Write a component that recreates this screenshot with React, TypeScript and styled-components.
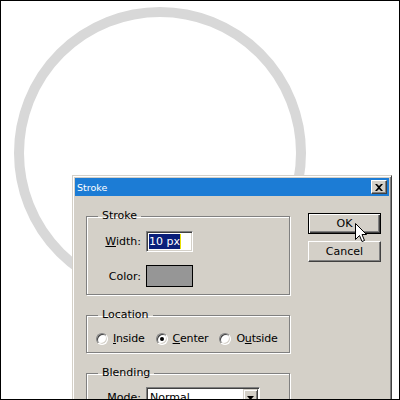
import styled, { createGlobalStyle } from "styled-components";

const GlobalStyle = createGlobalStyle`
  body {
    margin: 0;
    background: #fff;
  }
`;

const Frame = styled.div`
  position: relative;
  width: 400px;
  height: 400px;
  box-sizing: border-box;
  border: 1px solid #000;
  background: #fff;
  overflow: hidden;
`;

const Canvas = styled.svg`
  display: block;
`;

const Dialog = styled.div`
  position: absolute;
  left: 71px;
  top: 174px;
  width: 320px;
  height: 250px;
  box-sizing: border-box;
  padding: 2px;
  background: #d4d0c8;
  border: 1px solid;
  border-color: #d4d0c8 #404040 #404040 #d4d0c8;
  box-shadow: inset 1px 1px 0 #fff, inset -1px -1px 0 #808080;
  font-family: "DejaVu Sans", sans-serif;
  font-size: 11px;
  color: #000;
`;

const TitleBar = styled.div`
  display: flex;
  align-items: center;
  justify-content: space-between;
  height: 18px;
  padding: 0 2px;
  background: #1c7cd5;
  color: #fff;
  font-size: 9.5px;
`;

const CloseButton = styled.div`
  display: flex;
  align-items: center;
  justify-content: center;
  width: 16px;
  height: 14px;
  box-sizing: border-box;
  background: #d4d0c8;
  border: 1px solid;
  border-color: #fff #404040 #404040 #fff;
  box-shadow: inset -1px -1px 0 #808080;
`;

const Body = styled.div`
  display: flex;
  gap: 18px;
  padding: 13px 0 0 11px;
`;

const LeftCol = styled.div`
  display: flex;
  flex-direction: column;
  gap: 13px;
  width: 204px;
`;

const Group = styled.fieldset`
  margin: 0;
  padding: 0;
  min-width: 0;
  width: 204px;
  box-sizing: border-box;
  border: 1px solid #808080;
  box-shadow: 1px 1px 0 #fff, inset 1px 1px 0 #fff;
`;

const Legend = styled.legend`
  margin-left: 11px;
  padding: 0 4px;
  line-height: 14px;
`;

const FieldGrid = styled.div<{ $pad: string }>`
  display: grid;
  grid-template-columns: 54px 47px;
  column-gap: 5px;
  row-gap: 13px;
  align-items: center;
  padding: ${(p) => p.$pad};
`;

const Label = styled.div`
  text-align: right;
`;

const TextBox = styled.div`
  display: flex;
  align-items: center;
  width: 47px;
  height: 21px;
  box-sizing: border-box;
  padding-left: 2px;
  background: #fff;
  border: 1px solid;
  border-color: #808080 #fff #fff #808080;
  box-shadow: inset 1px 1px 0 #404040, inset -1px -1px 0 #d4d0c8;
`;

const Selected = styled.span`
  background: #0a1f7a;
  color: #fff;
  line-height: 15px;
  border-right: 1px solid #e8e000;
`;

const Swatch = styled.div`
  width: 47px;
  height: 22px;
  box-sizing: border-box;
  background: #969696;
  border: 1px solid #000;
`;

const RadioRow = styled.div`
  display: flex;
  align-items: center;
  gap: 11px;
  padding: 10px 0 7px 9px;
  letter-spacing: -0.2px;
`;

const RadioOption = styled.label`
  display: flex;
  align-items: center;
  gap: 5px;
`;

const RadioDot = styled.span<{ $on?: boolean }>`
  display: flex;
  align-items: center;
  justify-content: center;
  width: 12px;
  height: 12px;
  box-sizing: border-box;
  border-radius: 50%;
  background: #fff;
  border: 1px solid;
  border-color: #808080 #fff #fff #808080;
  box-shadow: inset 1px 1px 0 #404040, inset -1px -1px 0 #d4d0c8;

  &::after {
    content: "";
    display: ${(p) => (p.$on ? "block" : "none")};
    width: 4px;
    height: 4px;
    border-radius: 50%;
    background: #000;
  }
`;

const SelectBox = styled.div`
  display: flex;
  align-items: center;
  justify-content: space-between;
  width: 114px;
  height: 21px;
  box-sizing: border-box;
  padding: 0 1px 0 3px;
  background: #fff;
  border: 1px solid;
  border-color: #808080 #fff #fff #808080;
  box-shadow: inset 1px 1px 0 #404040;
`;

const DropButton = styled.div`
  display: flex;
  align-items: center;
  justify-content: center;
  width: 15px;
  height: 17px;
  box-sizing: border-box;
  background: #d4d0c8;
  border: 1px solid;
  border-color: #d4d0c8 #404040 #404040 #d4d0c8;
  box-shadow: inset 1px 1px 0 #fff, inset -1px -1px 0 #808080;
`;

const RightCol = styled.div`
  display: flex;
  flex-direction: column;
  gap: 7px;
  margin-top: 4px;
`;

const Button = styled.div<{ $default?: boolean }>`
  display: flex;
  align-items: center;
  justify-content: center;
  width: 73px;
  height: 21px;
  box-sizing: border-box;
  background: #d4d0c8;
  border: 1px solid;
  border-color: ${(p) =>
    p.$default ? "#000" : "#fff #404040 #404040 #fff"};
  box-shadow: ${(p) =>
    p.$default
      ? "inset 1px 1px 0 #fff, inset -1px -1px 0 #404040, inset -2px -2px 0 #808080"
      : "inset -1px -1px 0 #808080"};
`;

const Pointer = styled.svg`
  position: absolute;
  left: 354px;
  top: 222px;
`;

function App() {
  return (
    <Frame>
      <GlobalStyle />
      <Canvas width="398" height="398">
        <circle cx="159" cy="152" r="141" fill="none" stroke="#d8d8d8" strokeWidth="10" />
      </Canvas>
      <Dialog>
        <TitleBar>
          <span>Stroke</span>
          <CloseButton>
            <svg width="8" height="7" viewBox="0 0 8 7">
              <path d="M0 0h2l2 2 2-2h2L5 3.5 8 7H6L4 5 2 7H0l3-3.5z" fill="#000" />
            </svg>
          </CloseButton>
        </TitleBar>
        <Body>
          <LeftCol>
            <Group>
              <Legend>Stroke</Legend>
              <FieldGrid $pad="8px 0 7px 0">
                <Label>
                  <u>W</u>idth:
                </Label>
                <TextBox>
                  <Selected>10 px</Selected>
                </TextBox>
                <Label>Color:</Label>
                <Swatch />
              </FieldGrid>
            </Group>
            <Group>
              <Legend>Location</Legend>
              <RadioRow>
                <RadioOption>
                  <RadioDot />
                  <span>
                    <u>I</u>nside
                  </span>
                </RadioOption>
                <RadioOption>
                  <RadioDot $on />
                  <span>
                    <u>C</u>enter
                  </span>
                </RadioOption>
                <RadioOption>
                  <RadioDot />
                  <span>
                    O<u>u</u>tside
                  </span>
                </RadioOption>
              </RadioRow>
            </Group>
            <Group>
              <Legend>Blending</Legend>
              <FieldGrid $pad="7px 0 8px 0">
                <Label>
                  <u>M</u>ode:
                </Label>
                <SelectBox>
                  <span>Normal</span>
                  <DropButton>
                    <svg width="7" height="4" viewBox="0 0 7 4">
                      <path d="M0 0h7L3.5 4z" fill="#000" />
                    </svg>
                  </DropButton>
                </SelectBox>
              </FieldGrid>
            </Group>
          </LeftCol>
          <RightCol>
            <Button $default>OK</Button>
            <Button>Cancel</Button>
          </RightCol>
        </Body>
      </Dialog>
      <Pointer width="12" height="20" viewBox="0 0 12 20">
        <path
          d="M0.5 0.5V16.5L4.5 12.5L7 18.5L9.5 17.5L7 11.5H11.5Z"
          fill="#fff"
          stroke="#000"
          strokeWidth="1"
        />
      </Pointer>
    </Frame>
  );
}

export default App;
